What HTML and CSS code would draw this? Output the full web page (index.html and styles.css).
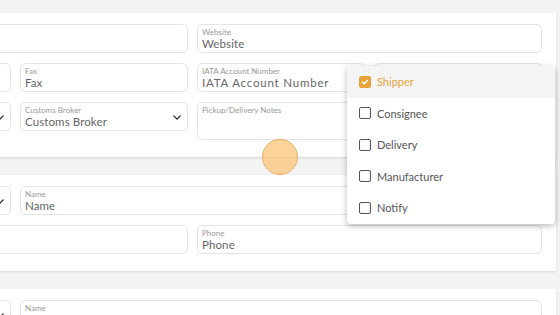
FILE: index.html
```html
<!DOCTYPE html>
<html>
<head>
<meta charset="utf-8">
<link rel="stylesheet" href="styles.css">
</head>
<body>
<div class="page">
  <section class="card">
    <div class="grid">
      <div class="field span2"><span class="label">Company</span><span class="value"></span></div>
      <div class="field span2"><span class="label">Website</span><span class="value">Website</span></div>

      <div class="field"><span class="label">Phone</span><span class="value">Phone</span></div>
      <div class="field"><span class="label">Fax</span><span class="value">Fax</span></div>
      <div class="field"><span class="label">IATA Account Number</span><span class="value wide">IATA Account Number</span></div>
      <div class="field"><span class="label">Tax ID</span><span class="value">Tax ID</span></div>

      <div class="field select"><span class="label">Type</span><span class="value">Type</span><svg class="chev" viewBox="0 0 10 6"><path d="M1 1l4 4 4-4"/></svg></div>
      <div class="field select"><span class="label">Customs Broker</span><span class="value">Customs Broker</span><svg class="chev" viewBox="0 0 10 6"><path d="M1 1l4 4 4-4"/></svg></div>
      <div class="field span2 tall"><span class="label">Pickup/Delivery Notes</span></div>
    </div>
  </section>

  <section class="card">
    <div class="grid">
      <div class="field select"><span class="label">Title</span><span class="value">Title</span><svg class="chev" viewBox="0 0 10 6"><path d="M1 1l4 4 4-4"/></svg></div>
      <div class="field span3"><span class="label">Name</span><span class="value">Name</span></div>

      <div class="field span2"><span class="label">Email</span><span class="value"></span></div>
      <div class="field span2"><span class="label">Phone</span><span class="value">Phone</span></div>
    </div>
  </section>

  <section class="card">
    <div class="grid">
      <div class="field select"><span class="label">Title</span><span class="value">Title</span><svg class="chev" viewBox="0 0 10 6"><path d="M1 1l4 4 4-4"/></svg></div>
      <div class="field span3"><span class="label">Name</span><span class="value">Name</span></div>
    </div>
  </section>
</div>

<ul class="menu">
  <li class="item active"><span class="box checked"><svg viewBox="0 0 12 12"><path d="M3 6.2l2 2 4-4.2"/></svg></span>Shipper</li>
  <li class="item"><span class="box"></span>Consignee</li>
  <li class="item"><span class="box"></span>Delivery</li>
  <li class="item"><span class="box"></span>Manufacturer</li>
  <li class="item"><span class="box"></span>Notify</li>
</ul>

<div class="touch"></div>
</body>
</html>
```

FILE: styles.css
```css
html, body {
  margin: 0;
  padding: 0;
}
body {
  background: #f3f3f3;
  font-family: "Lato", "Noto Sans", sans-serif;
  width: 560px;
  height: 315px;
  overflow: hidden;
  position: relative;
}
.page {
  padding-top: 13px;
  margin-left: -172px;
  width: 728px;
  display: flex;
  flex-direction: column;
  gap: 18px;
}
.card {
  background: #fff;
  padding: 11px 14px 17px 15px;
  box-shadow: 0 1px 2px rgba(0,0,0,0.12);
}
.grid {
  display: grid;
  grid-template-columns: repeat(4, 168px);
  column-gap: 9px;
  row-gap: 10px;
}
.field {
  position: relative;
  box-sizing: border-box;
  height: 29px;
  border: 1px solid #e4e4e4;
  border-radius: 5px;
  padding: 2px 4px 0 4px;
  display: flex;
  flex-direction: column;
}
.span2 { grid-column: span 2; }
.span3 { grid-column: span 3; }
.tall { height: 38px; }
.label {
  font-size: 8px;
  line-height: 10px;
  color: #999;
  white-space: nowrap;
}
.value {
  font-size: 11.5px;
  line-height: 14px;
  color: #666;
  white-space: nowrap;
  letter-spacing: 0.1px;
}
.value.wide {
  letter-spacing: 0.8px;
}
.chev {
  position: absolute;
  right: 6px;
  top: 12px;
  width: 8px;
  height: 5px;
  fill: none;
  stroke: #222;
  stroke-width: 1.6;
  stroke-linecap: round;
  stroke-linejoin: round;
}
.menu {
  position: absolute;
  left: 347px;
  top: 66px;
  width: 208px;
  margin: 0;
  padding: 0;
  list-style: none;
  background: #fff;
  border-radius: 4px;
  box-shadow: 0 2px 6px rgba(0,0,0,0.28);
  overflow: hidden;
}
.item {
  height: 31.5px;
  display: flex;
  align-items: center;
  padding-left: 12px;
  font-size: 11px;
  color: #555;
}
.item.active {
  background: #f5f5f5;
  color: #e6a540;
}
.box {
  box-sizing: border-box;
  width: 12px;
  height: 12px;
  border: 1.5px solid #555;
  border-radius: 2px;
  margin-right: 6px;
  display: flex;
}
.box.checked {
  background: #e8a33a;
  border-color: #e8a33a;
}
.box svg {
  width: 100%;
  height: 100%;
  fill: none;
  stroke: #fff;
  stroke-width: 1.6;
  stroke-linecap: round;
  stroke-linejoin: round;
}
.touch {
  position: absolute;
  left: 262px;
  top: 139px;
  width: 36px;
  height: 36px;
  box-sizing: border-box;
  border-radius: 50%;
  background: rgba(251, 196, 120, 0.75);
  border: 1px solid #eeae62;
}
```
